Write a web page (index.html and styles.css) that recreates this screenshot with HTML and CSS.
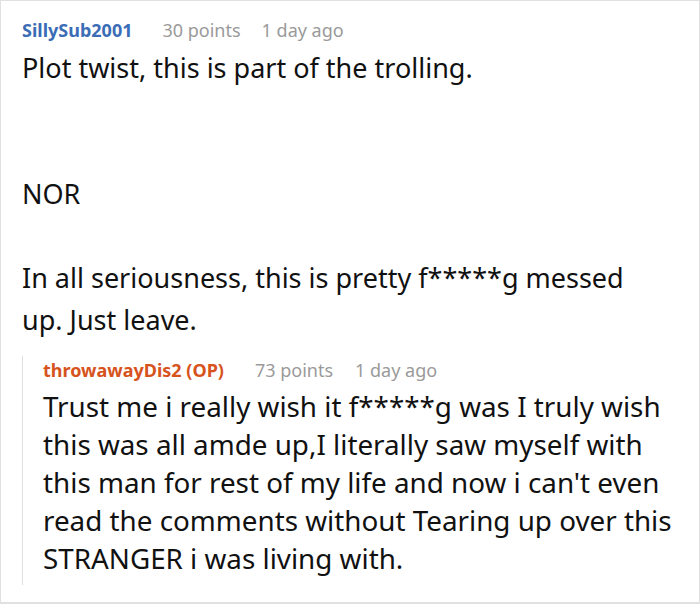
FILE: index.html
```html
<!DOCTYPE html>
<html>
<head>
<meta charset="utf-8">
<link rel="stylesheet" href="styles.css">
</head>
<body>
<div class="frame">
  <div class="comment">
    <div class="meta">
      <span class="user user-blue">SillySub2001</span>
      <span class="points">30 points</span>
      <span class="time">1 day ago</span>
    </div>
    <div class="body top-body">
      <p>Plot twist, this is part of the trolling.</p>
      <p>&nbsp;</p>
      <p>&nbsp;</p>
      <p>NOR</p>
      <p>&nbsp;</p>
      <p>In all seriousness, this is pretty f*****g messed up. Just leave.</p>
    </div>
    <div class="reply">
      <div class="meta reply-meta">
        <span class="user user-op">throwawayDis2 (OP)</span>
        <span class="points points-reply">73 points</span>
        <span class="time time-reply">1 day ago</span>
      </div>
      <div class="body reply-body">
        <p>Trust me i really wish it f*****g was I truly wish this was all amde up,I literally saw myself with this man for rest of my life and now i can't even read the comments without Tearing up over this STRANGER i was living with.</p>
      </div>
    </div>
  </div>
</div>
</body>
</html>
```
FILE: styles.css
```css
html, body {
  margin: 0;
  padding: 0;
  background: #ffffff;
}
.frame {
  box-sizing: border-box;
  width: 700px;
  height: 604px;
  border: 1px solid #e0e0e0;
  border-bottom-width: 2px;
  font-family: "Noto Sans", "Open Sans", sans-serif;
  color: #111111;
  overflow: hidden;
}
.comment {
  padding: 15px 20px 0 21px;
}
.meta {
  font-size: 18px;
  line-height: 28px;
  display: flex;
  align-items: baseline;
  white-space: nowrap;
}
.user {
  font-weight: 700;
}
.user-blue { color: #3b6cb6; }
.user-op { color: #d6531d; }
.points {
  color: #9a9a9a;
  margin-left: 30px;
}
.time {
  color: #9a9a9a;
  margin-left: 21px;
}
.points-reply { margin-left: 31px; }
.time-reply { margin-left: 22px; }
.body p {
  margin: 0;
}
.top-body {
  margin: 3px 30px 0 0;
  font-size: 27px;
  line-height: 42px;
}
.reply {
  margin-top: 27px;
  border-left: 1px solid #e0e0e0;
  padding: 0 0 8px 20px;
}
.reply-meta {
  margin-top: -12px;
}
.reply-body {
  margin-top: 3px;
  font-size: 27.8px;
  line-height: 38px;
}
```
